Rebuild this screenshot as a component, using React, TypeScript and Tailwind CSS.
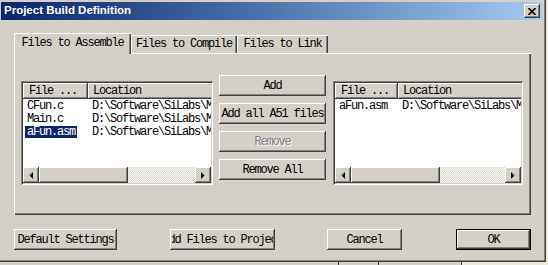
import React from "react";

const mono = "font-['Liberation_Mono',monospace] text-[12px] tracking-[-1.2px] leading-none whitespace-nowrap";
const raised =
  "bg-[#d4d0c8] shadow-[inset_-1px_-1px_#404040,inset_1px_1px_#ffffff,inset_-2px_-2px_#808080,inset_2px_2px_#d4d0c8]";
const sunken =
  "bg-white shadow-[inset_1px_1px_#808080,inset_-1px_-1px_#ffffff,inset_2px_2px_#404040,inset_-2px_-2px_#d4d0c8]";
const headerCell =
  "bg-[#d4d0c8] shadow-[inset_-1px_-1px_#404040,inset_1px_1px_#ffffff,inset_-2px_-2px_#808080]";

function Btn({
  children,
  className,
  disabled,
}: {
  children: React.ReactNode;
  className: string;
  disabled?: boolean;
}) {
  return (
    <div className={`${raised} ${className} h-[21px] flex items-center justify-center overflow-hidden`}>
      <span
        className={`${mono} ${
          disabled ? "text-[#808080] [text-shadow:1px_1px_#ffffff]" : "text-black"
        }`}
      >
        {children}
      </span>
    </div>
  );
}

function Arrow({ dir }: { dir: "left" | "right" }) {
  return (
    <div className={`${raised} w-[16px] h-[16px] flex items-center justify-center shrink-0`}>
      <svg width="4" height="7" viewBox="0 0 4 7">
        {dir === "left" ? (
          <path d="M4 0 L4 7 L0.5 3.5 Z" fill="#000" />
        ) : (
          <path d="M0 0 L0 7 L3.5 3.5 Z" fill="#000" />
        )}
      </svg>
    </div>
  );
}

type Row = { name: string; loc: string; selected?: boolean };

function ListView({
  className,
  col1,
  rows,
  trackClass,
}: {
  className: string;
  col1: string;
  rows: Row[];
  trackClass: string;
}) {
  return (
    <div className={`${sunken} ${className} h-[104px] p-[2px] flex flex-col shrink-0`}>
      <div className="flex-1 flex flex-col overflow-hidden bg-white">
        <div className="flex h-[16px] shrink-0">
          <div className={`${headerCell} ${col1} shrink-0 flex items-center pl-[6px]`}>
            <span className={`${mono} text-black`}>File ...</span>
          </div>
          <div className={`${headerCell} w-[200px] shrink-0 flex items-center pl-[5px]`}>
            <span className={`${mono} text-black`}>Location</span>
          </div>
        </div>
        <div className="flex-1 flex flex-col overflow-hidden">
          {rows.map((r) => (
            <div key={r.name} className="flex h-[13px] shrink-0">
              <div className={`${col1} shrink-0 flex items-center pl-[2px]`}>
                <span
                  className={`${mono} h-[12px] flex items-center px-[2px] ${
                    r.selected ? "bg-[#0a246a] text-white" : "text-black"
                  }`}
                >
                  {r.name}
                </span>
              </div>
              <div className="flex items-center pl-[4px]">
                <span className={`${mono} text-black`}>{r.loc}</span>
              </div>
            </div>
          ))}
        </div>
        <div className="flex h-[16px] shrink-0 bg-[#d4d0c8]">
          <Arrow dir="left" />
          <div className={`${raised} w-[89px] h-[16px] shrink-0`} />
          <div
            className={`${trackClass} h-[16px] bg-[image:repeating-conic-gradient(#ffffff_0_25%,#d4d0c8_0_50%)] bg-[length:2px_2px]`}
          />
          <Arrow dir="right" />
        </div>
      </div>
    </div>
  );
}

export default function App() {
  const loc = "D:\\Software\\SiLabs\\MCU\\Examples";
  return (
    <div className="w-[548px] h-[265px] bg-[#ece9d8] overflow-hidden flex flex-col">
      <div className="w-[546px] h-[262px] shrink-0 bg-[#d4d0c8] border-r border-b border-[#404040] shadow-[inset_-1px_-1px_#808080] flex flex-col">
        {/* title bar */}
        <div className="ml-[1px] mt-[2px] w-[541px] h-[18px] shrink-0 bg-linear-to-r from-[#0a246a] to-[#a6caf0] flex items-center justify-between pl-[3px] pr-[2px]">
          <span className="font-['Liberation_Sans',Arial,sans-serif] font-bold text-[11.5px] text-white leading-none">
            Project Build Definition
          </span>
          <div className={`${raised} w-[16px] h-[14px] flex items-center justify-center`}>
            <svg width="8" height="7" viewBox="0 0 8 7">
              <path d="M0.5 0 L7.5 7 M7.5 0 L0.5 7" stroke="#000" strokeWidth="1.6" />
            </svg>
          </div>
        </div>

        {/* tabs */}
        <div className="mt-[13px] ml-[14px] h-[20px] flex items-end shrink-0 relative z-10">
          <div className="w-[117px] h-[21px] -mb-[1px] bg-[#d4d0c8] shadow-[inset_1px_1px_#ffffff,inset_-1px_0_#404040,inset_-2px_0_#808080] flex items-center justify-center pb-[2px]">
            <span className={`${mono} text-black`}>Files to Assemble</span>
          </div>
          <div className="w-[106px] h-[18px] bg-[#d4d0c8] shadow-[inset_1px_1px_#ffffff,inset_-1px_0_#404040,inset_-2px_0_#808080] flex items-center justify-center">
            <span className={`${mono} text-black`}>Files to Compile</span>
          </div>
          <div className="w-[91px] h-[18px] bg-[#d4d0c8] shadow-[inset_1px_1px_#ffffff,inset_-1px_0_#404040,inset_-2px_0_#808080] flex items-center justify-center">
            <span className={`${mono} text-black`}>Files to Link</span>
          </div>
        </div>

        {/* tab panel */}
        <div className="ml-[14px] w-[517px] h-[162px] shrink-0 bg-[#d4d0c8] shadow-[inset_1px_1px_#ffffff,inset_-1px_-1px_#404040,inset_-2px_-2px_#808080] flex items-start pt-[22px] pl-[7px]">
          <div className="mt-[6px]">
            <ListView
              className="w-[192px]"
              col1="w-[65px]"
              trackClass="w-[67px]"
              rows={[
                { name: "CFun.c", loc },
                { name: "Main.c", loc },
                { name: "aFun.asm", loc, selected: true },
              ]}
            />
          </div>
          <div className="ml-[6px] w-[107px] flex flex-col gap-[7px]">
            <Btn className="w-[107px]">Add</Btn>
            <Btn className="w-[107px]">Add all A51 files</Btn>
            <Btn className="w-[107px]" disabled>
              Remove
            </Btn>
            <Btn className="w-[107px]">Remove All</Btn>
          </div>
          <div className="mt-[6px] ml-[7px]">
            <ListView
              className="w-[190px]"
              col1="w-[63px]"
              trackClass="w-[65px]"
              rows={[{ name: "aFun.asm", loc }]}
            />
          </div>
        </div>

        {/* bottom buttons */}
        <div className="mt-[14px] flex shrink-0">
          <Btn className="ml-[14px] w-[103px]">Default Settings</Btn>
          <div className="ml-[53px]">
            <div className={`${raised} w-[105px] h-[21px] p-[2px]`}>
              <div className="w-full h-full overflow-hidden flex items-center justify-center">
                <span className={`${mono} text-black`}>Add Files to Project</span>
              </div>
            </div>
          </div>
          <Btn className="ml-[52px] w-[75px]">Cancel</Btn>
          <div className="ml-[54px] w-[75px] h-[21px] border border-black">
            <div className={`${raised} w-full h-full flex items-center justify-center`}>
              <span className={`${mono} text-black`}>OK</span>
            </div>
          </div>
        </div>
      </div>
      <div className="h-[3px] flex">
        <div className="w-[338px] h-[3px] bg-[#d4d0c8]" />
        <div className="w-[1px] h-[3px] bg-[#404040]" />
        <div className="w-[39px] h-[3px] bg-[#d4d0c8]" />
        <div className="w-[1px] h-[3px] bg-[#404040]" />
        <div className="w-[82px] h-[3px] bg-[#d4d0c8]" />
        <div className="w-[1px] h-[3px] bg-[#404040]" />
      </div>
    </div>
  );
}
